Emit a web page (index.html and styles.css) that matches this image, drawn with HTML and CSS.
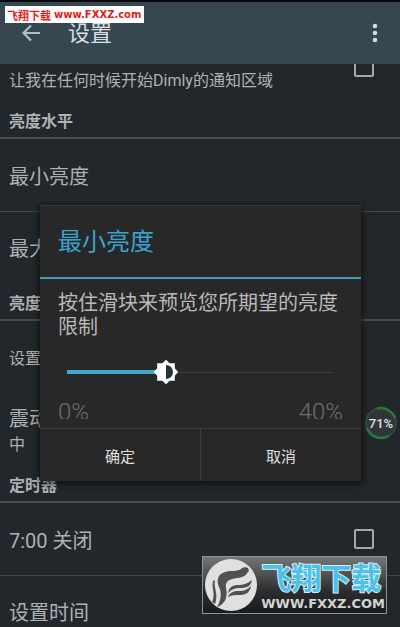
FILE: index.html
```html
<!DOCTYPE html>
<html lang="zh-CN">
<head>
<meta charset="utf-8">
<meta name="viewport" content="width=device-width, initial-scale=1">
<title>设置</title>
<link rel="stylesheet" href="styles.css">
</head>
<body>
<div class="screen">
  <header class="bar">
    <button class="icon-btn" aria-label="返回">
      <svg width="20" height="20" viewBox="0 0 20 20"><path d="M19 10H3M10 2.500L2.500 10L10 17.500" fill="none" stroke="#b4bfc4" stroke-width="2.200"/></svg>
    </button>
    <h1 class="bar-title">设置</h1>
    <button class="icon-btn" aria-label="更多">
      <svg width="6" height="20" viewBox="0 0 6 20"><g fill="#d3dcdf"><circle cx="3" cy="3" r="2.300"/><circle cx="3" cy="10" r="2.300"/><circle cx="3" cy="17" r="2.300"/></g></svg>
    </button>
  </header>

  <main class="list">
    <label class="row notice"><span>让我在任何时候开始Dimly的通知区域</span><input class="check" type="checkbox"></label>
    <h2 class="section">亮度水平</h2>
    <div class="row">最小亮度</div>
    <div class="row">最大</div>
    <h2 class="section">亮度</h2>
    <div class="row small">设置</div>
    <div class="row stacked"><span>震动</span><span class="sub">中</span></div>
    <h2 class="section">定时器</h2>
    <label class="row"><span>7:00 关闭</span><input class="check" type="checkbox"></label>
    <div class="row">设置时间</div>
  </main>

  <section class="dialog" role="dialog" aria-labelledby="dialog-title">
    <h2 class="dialog-title" id="dialog-title">最小亮度</h2>
    <div class="dialog-body">
      <label class="message" for="level">按住滑块来预览您所期望的亮度限制</label>
      <div class="slider">
        <input id="level" type="range" min="0" max="100" value="37">
        <svg class="thumb" width="26" height="26" viewBox="0 0 26 26"><path fill="#fff" d="M13 .800L16.700 4.200H21.800V9.300L25.200 13L21.800 16.700V21.800H16.700L13 25.200L9.300 21.800H4.200V16.700L.800 13L4.200 9.300V4.200H9.300Z"/><path fill="#263339" d="M13 6A7 7 0 0 1 13 20Z"/></svg>
      </div>
      <div class="limits"><span>0%</span><span>40%</span></div>
    </div>
    <div class="actions"><button>确定</button><button>取消</button></div>
  </section>

  <div class="battery">
    <svg class="ring" width="34" height="34" viewBox="0 0 34 34"><circle cx="17" cy="17" r="15" fill="#303538" stroke="#384641" stroke-width="2"/><path d="M13 2.600A15 15 0 0 1 31 12M3 22A15 15 0 0 0 25 29.700" fill="none" stroke="#267b3c" stroke-width="2.500"/></svg>
    <span>71%</span>
  </div>

  <div class="tag"><span class="tag-name">飞翔下载</span><span>www.FXXZ.com</span></div>

  <div class="watermark">
    <svg width="54" height="54" viewBox="0 0 54 54"><circle cx="27" cy="27" r="26" fill="#e0e0e0"/><g fill="#505050"><path d="M13 49C17 42 18 35 15 29C12 22 14 16 21 14C27 12 32 14 37 11C39 9 42 9 44 10L45 13C42 16 42 18 38 19C31 21 24 20 22 26C21 30 24 34 22 40C21 44 17 48 13 49Z"/><path d="M9 23L11 22C9 29 15 36 11 46L8 44C12 36 7 30 9 23Z"/><path d="M24 35C25 29 29 27 34 27C39 27 43 26 48 22C47 28 43 30 37 30C31 30 28 31 24 35Z"/><path d="M24 39C26 34 30 33 35 33C40 33 43 32 47 28C46 35 41 37 36 37C31 37 28 37 24 39Z"/></g></svg>
    <div class="brand"><span class="brand-name">飞翔下载</span><span class="brand-url">WWW.FXXZ.COM</span></div>
  </div>
</div>
</body>
</html>
```
FILE: styles.css
```css
* { box-sizing: border-box; }

body {
  margin: 0;
  background: #22272b;
  color: #aeb1b3;
  font-family: Roboto, "Noto Sans CJK SC", sans-serif;
}

h1, h2 { margin: 0; }

button {
  padding: 0;
  border: 0;
  background: none;
  color: inherit;
  font: inherit;
}

.screen {
  position: relative;
  height: 100vh;
  overflow: hidden;
}

.bar {
  position: relative;
  z-index: 1;
  display: flex;
  align-items: center;
  height: 64px;
  padding: 0 22px 0 21px;
  border-top: 2px solid #07090a;
  background: #37474f;
}

.icon-btn { display: flex; }

.bar-title {
  flex: 1;
  padding: 2px 0 0 27px;
  color: #d9dfe2;
  font-size: 22px;
  font-weight: 400;
  line-height: 24px;
}

.row {
  display: flex;
  align-items: center;
  justify-content: space-between;
  height: 72px;
  padding: 0 26px 0 9px;
  font-size: 20px;
}

.row + .row { border-top: 1px solid #42474a; }

.row.notice {
  height: 37px;
  align-items: flex-start;
  font-size: 16px;
  line-height: 34px;
}

.notice .check { margin-top: -7px; }

.row.small { font-size: 16px; }

.row.stacked {
  flex-direction: column;
  align-items: flex-start;
  justify-content: center;
  padding-top: 5px;
  border: 0;
  line-height: 26px;
}

.sub { font-size: 16px; }

.section {
  height: 38px;
  padding-left: 9px;
  border-bottom: 2px solid #474c4f;
  font-size: 16px;
  font-weight: 700;
  line-height: 41px;
}

.check {
  width: 20px;
  height: 20px;
  margin: 0;
  border: 2px solid #a5a8aa;
  border-radius: 2px;
  appearance: none;
}

.dialog {
  position: absolute;
  top: 205px;
  left: 10%;
  right: 39px;
  border-top: 1px solid #383838;
  background: #282828;
  box-shadow: 0 2px 7px 1px rgba(0, 0, 0, 0.6);
}

.dialog-title {
  height: 73px;
  padding-left: 18px;
  border-bottom: 2px solid #4299b7;
  color: #38a4cf;
  font-size: 24px;
  font-weight: 400;
  line-height: 72px;
}

.dialog-body { padding: 12px 18px 0; }

.message {
  display: block;
  color: #b9b9b9;
  font-size: 20px;
  line-height: 24px;
}

.slider {
  position: relative;
  height: 26px;
  margin: 20px 9px 0;
}

.slider input {
  display: block;
  width: 100%;
  height: 26px;
  margin: 0;
  background:
    linear-gradient(#42a7cb, #42a7cb) left center / 37% 4px no-repeat,
    linear-gradient(#3b3b3b, #3b3b3b) left center / 100% 1px no-repeat;
  appearance: none;
}

.slider input::-webkit-slider-thumb {
  width: 26px;
  height: 26px;
  appearance: none;
}

.thumb {
  position: absolute;
  top: 0;
  left: 37%;
  margin-left: -13px;
  pointer-events: none;
}

.limits {
  display: flex;
  justify-content: space-between;
  height: 19px;
  margin-top: 15px;
  overflow: hidden;
  color: #6e6e6e;
  font-size: 24px;
  font-weight: 300;
  line-height: 24px;
}

.actions {
  display: flex;
  margin-top: 9px;
  border-top: 1px solid #3e3e3e;
}

.actions button {
  flex: 1;
  height: 52px;
  color: #e0e0e0;
  font-size: 15px;
}

.actions button + button { border-left: 1px solid #3e3e3e; }

.battery {
  position: absolute;
  top: 406px;
  right: 2px;
  display: grid;
  place-items: center;
  color: #e2e2e2;
  font-size: 13px;
  font-weight: 500;
}

.battery > * { grid-area: 1 / 1; }

.tag {
  position: absolute;
  z-index: 2;
  top: 6px;
  left: 5px;
  display: flex;
  gap: 3px;
  align-items: center;
  height: 17px;
  padding: 0 3px 0 2px;
  background: #fff;
  color: #e01b1b;
  font: bold 10px "DejaVu Sans", sans-serif;
}

.tag-name { font: bold 11px "Noto Sans CJK SC", sans-serif; }

.watermark {
  position: absolute;
  top: 556px;
  right: 13px;
  display: flex;
  gap: 3px;
  align-items: center;
  height: 58px;
  padding: 0 1px;
  border: 1px solid #8f9294;
  background: linear-gradient(#747678, #2b2d2f 60%, #191b1d);
}

.brand {
  display: flex;
  flex-direction: column;
  padding-top: 4px;
}

.brand-name {
  color: #4cc0e8;
  font-size: 30px;
  font-weight: 700;
  line-height: 34px;
  -webkit-text-stroke: 2px #d3f1fb;
  paint-order: stroke fill;
}

.brand-url {
  color: #d4d4d4;
  font: bold 13px/16px "DejaVu Sans", sans-serif;
}
```
